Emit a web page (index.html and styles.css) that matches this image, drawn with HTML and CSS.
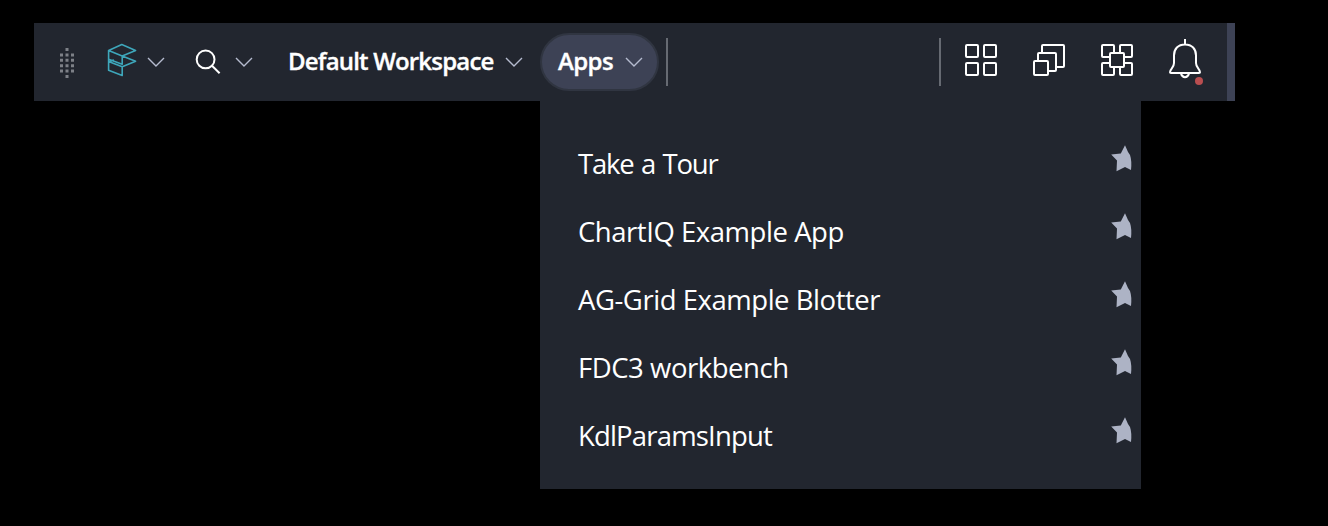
FILE: index.html
```html
<!DOCTYPE html>
<html lang="en">
<head>
<meta charset="utf-8">
<title>Workspace toolbar</title>
<link rel="stylesheet" href="styles.css">
</head>
<body>
<svg class="defs" width="0" height="0" aria-hidden="true">
  <symbol id="chevron" viewBox="0 0 18 10"><path d="M1 1L9 9L17 1" fill="none" stroke="currentColor" stroke-width="1.4"/></symbol>
  <symbol id="star" viewBox="1111 145 21 27"><path d="M1125 145.2L1128 152L1130 155Q1132 161 1131 170L1125 167L1116.5 171.2L1117 160.5L1111.2 154.4L1120.8 153.6Z" fill="currentColor"/></symbol>
</svg>
<header class="toolbar">
  <svg class="handle" width="54" height="78" viewBox="34 23 54 78">
    <path d="M67 48V79" stroke-dasharray="3 2.4"/>
    <path d="M61.5 53.4V74M72.5 53.4V74" stroke-dasharray="3 2.4"/>
  </svg>
  <button class="tool brand">
    <svg class="logo" width="32" height="36" viewBox="106 42 32 36">
      <path d="M121.8 44.6L135.6 50.4L122.2 56L108.6 50.4ZM108.6 50.4V70.3L122.2 75.4V66.7L108.6 61.4M108.6 59.3L122.2 64.2V56L135.6 61.3L122.2 66.7M108.6 61.8L114 60"/>
    </svg>
    <svg class="chevron" width="18" height="10"><use href="#chevron"/></svg>
  </button>
  <button class="tool search">
    <svg class="glass" width="28" height="28" viewBox="194 48 28 28"><circle cx="205.6" cy="59.4" r="8.9"/><path d="M212 65.8L219.6 73.2"/></svg>
    <svg class="chevron" width="18" height="10"><use href="#chevron"/></svg>
  </button>
  <button class="tool workspace"><span class="label">Default Workspace</span><svg class="chevron" width="18" height="10"><use href="#chevron"/></svg></button>
  <button class="tool apps"><span class="label">Apps</span><svg class="chevron" width="18" height="10"><use href="#chevron"/></svg></button>
  <span class="divider divider-left"></span>
  <span class="divider divider-right"></span>
  <div class="actions">
    <svg class="action" width="36" height="48" viewBox="963 36 36 48">
      <rect x="966" y="45" width="12" height="12" rx="1"/><rect x="984" y="45" width="12" height="12" rx="1"/>
      <rect x="966" y="63" width="12" height="12" rx="1"/><rect x="984" y="63" width="12" height="12" rx="1"/>
    </svg>
    <svg class="action" width="36" height="48" viewBox="1031 36 36 48">
      <rect x="1042" y="45" width="22" height="22" rx="1"/><rect x="1038" y="53" width="18" height="18" rx="1"/><rect x="1034" y="61" width="14" height="14" rx="1"/>
    </svg>
    <svg class="action" width="36" height="48" viewBox="1099 36 36 48">
      <rect x="1102" y="45" width="12" height="12" rx="1"/><rect x="1120" y="45" width="12" height="12" rx="1"/>
      <rect x="1102" y="63" width="12" height="12" rx="1"/><rect x="1120" y="63" width="12" height="12" rx="1"/>
      <rect x="1110" y="53" width="14" height="14" rx="1"/>
    </svg>
    <svg class="action" width="38" height="54" viewBox="1167 33 38 54">
      <path d="M1185 39V44M1185 44.5C1178 44.5 1174 49 1174 55.5V63C1174 68 1170 69 1170 72.2Q1170 73 1171 73H1199Q1200 73 1200 72.2C1200 69 1196 68 1196 63V55.5C1196 49 1192 44.5 1185 44.5ZM1181 73.5Q1182 77.2 1185 77.2Q1188 77.2 1189 73.5"/>
      <circle class="alert" cx="1199" cy="81" r="4"/>
    </svg>
  </div>
</header>
<nav class="menu">
  <div class="item"><span class="name tour">Take a Tour</span><svg class="star" width="21" height="27"><use href="#star"/></svg></div>
  <div class="item"><span class="name">ChartIQ Example App</span><svg class="star" width="21" height="27"><use href="#star"/></svg></div>
  <div class="item"><span class="name">AG-Grid Example Blotter</span><svg class="star" width="21" height="27"><use href="#star"/></svg></div>
  <div class="item"><span class="name">FDC3 workbench</span><svg class="star" width="21" height="27"><use href="#star"/></svg></div>
  <div class="item"><span class="name params">KdlParamsInput</span><svg class="star" width="21" height="27"><use href="#star"/></svg></div>
</nav>
</body>
</html>
```
FILE: styles.css
```css
* { box-sizing: border-box; }
body { margin: 0; padding: 23px 0 0 34px; height: 526px; overflow: hidden; background: #000; color: #fff; font-family: "Open Sans", "Noto Sans", sans-serif; }
svg { display: block; flex: none; }
.defs { position: absolute; }
.toolbar { display: flex; align-items: center; width: 1201px; height: 78px; background: #22262f; border-right: 8px solid #3d4255; }
.handle { fill: none; stroke: #7d8087; stroke-width: 3; }
.tool { display: flex; align-items: center; flex: none; height: 78px; margin: 0; padding: 0; border: 0; background: none; color: #fff; font: 600 24px/34px "Open Sans", "Noto Sans", sans-serif; white-space: nowrap; }
.brand { width: 88px; padding-left: 18px; }
.logo { margin-top: -4px; fill: none; stroke: #3ea6ba; stroke-width: 1.6; stroke-linejoin: round; }
.chevron { color: #b5bbcf; }
.brand .chevron { margin-left: 9px; }
.search { width: 90px; padding-left: 18px; }
.glass { fill: none; stroke: #fff; stroke-width: 2; }
.search .chevron { margin-left: 13px; }
.label { margin-top: -2px; text-align: left; -webkit-text-stroke: 0.35px #fff; }
.workspace { width: 274px; padding-left: 22px; }
.workspace .label { width: 217px; letter-spacing: -0.82px; }
.apps { width: 119px; height: 58px; padding-left: 16px; border: 2px solid #303541; border-radius: 29px; background: #3d4255; }
.apps .label { width: 67px; letter-spacing: -0.6px; }
.divider { flex: none; width: 2px; height: 48px; background: #666a72; }
.divider-left { margin-left: 7px; }
.divider-right { margin-left: auto; }
.actions { display: flex; align-items: center; gap: 32px; margin: 0 22px 0 22px; height: 78px; }
.action { fill: #22262f; stroke: #fff; stroke-width: 2; margin-top: -4px; }
.alert { fill: #b94e50; stroke: none; }
.menu { width: 601px; height: 388px; margin-left: 506px; padding: 29px 9px 0 38px; background: #22262f; }
.item { display: flex; align-items: center; justify-content: space-between; height: 68px; }
.name { margin-top: -1px; font-size: 27.5px; line-height: 38px; letter-spacing: -0.46px; white-space: nowrap; }
.tour { letter-spacing: -1.2px; word-spacing: 1.5px; }
.params { letter-spacing: -0.83px; }
.star { margin-top: -12px; color: #adb3c5; }
```
